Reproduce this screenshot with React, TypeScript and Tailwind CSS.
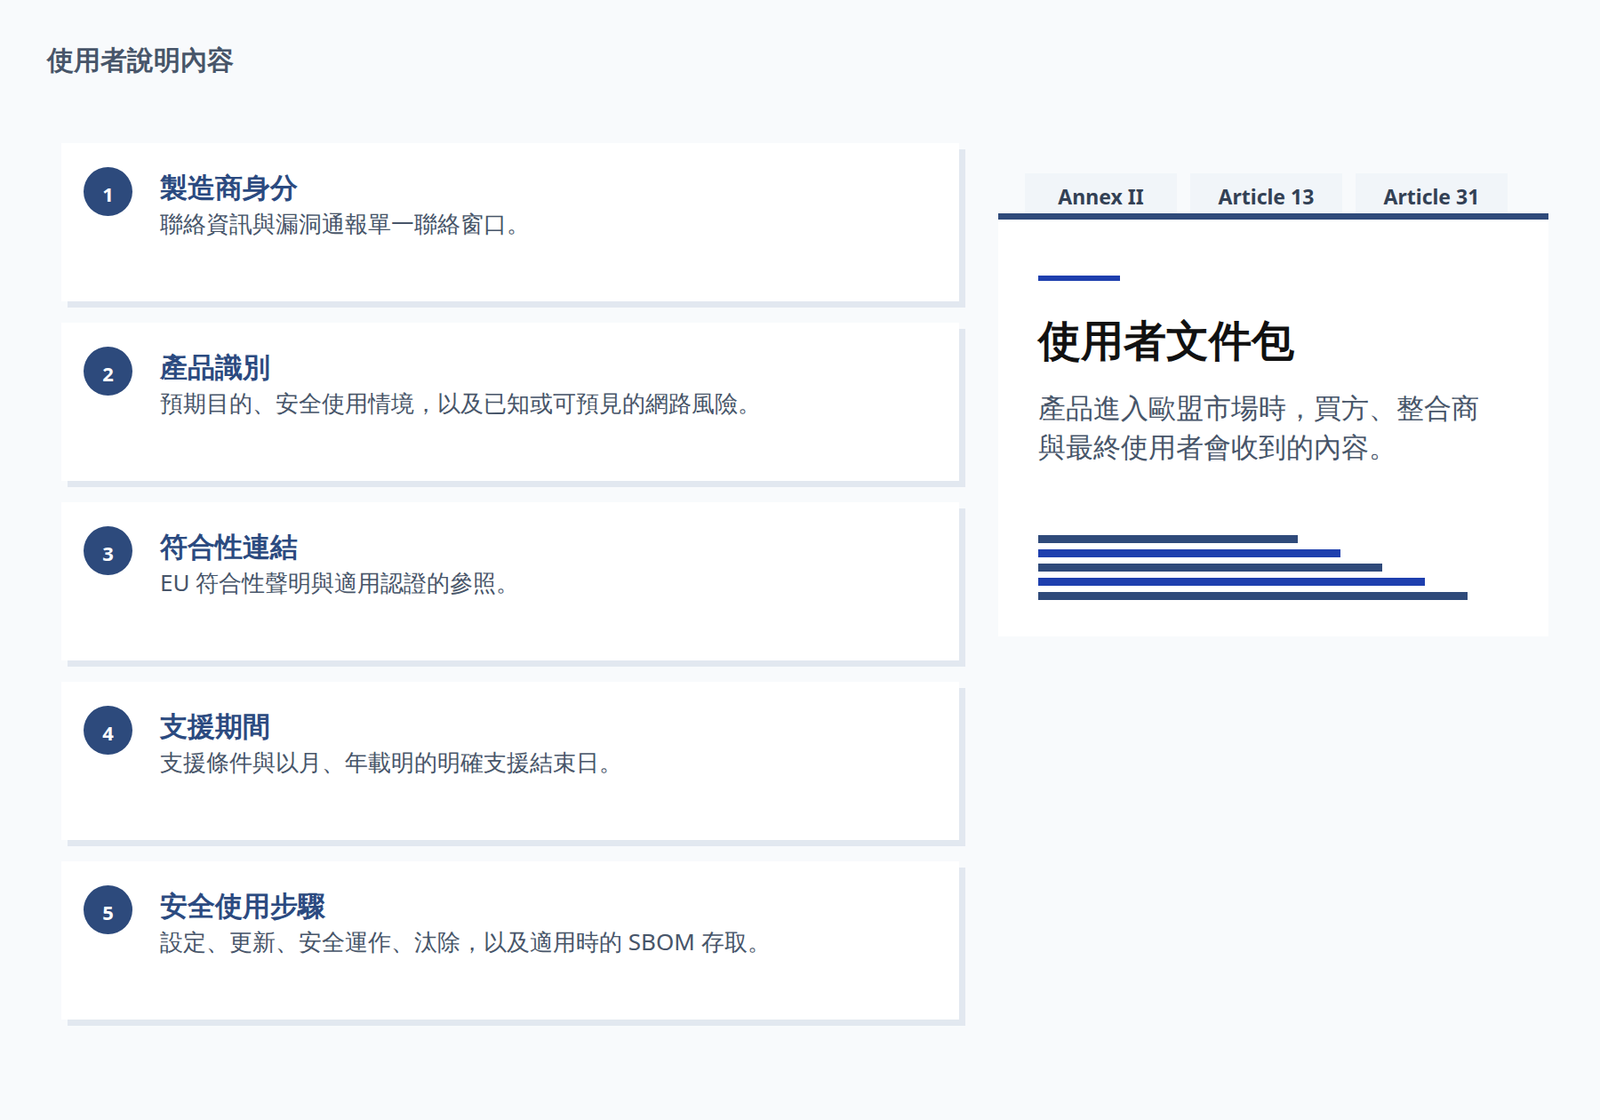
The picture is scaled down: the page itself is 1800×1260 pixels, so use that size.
const items = [
  ["製造商身分", "聯絡資訊與漏洞通報單一聯絡窗口。"],
  ["產品識別", "預期目的、安全使用情境，以及已知或可預見的網路風險。"],
  ["符合性連結", "EU 符合性聲明與適用認證的參照。"],
  ["支援期間", "支援條件與以月、年載明的明確支援結束日。"],
  ["安全使用步驟", "設定、更新、安全運作、汰除，以及適用時的 SBOM 存取。"],
];
const bars = [
  [292, "bg-[#2f4a7a]"],
  [340, "bg-[#1e3fae]"],
  [387, "bg-[#2f4a7a]"],
  [435, "bg-[#1e3fae]"],
  [483, "bg-[#2f4a7a]"],
] as const;

export default function App() {
  return (
    <div className="w-[1800px] h-[1260px] bg-[#f8fafc] font-['Noto_Sans_CJK_TC',sans-serif] pl-[53px] pt-[47px]">
      <h1 className="text-[30px] font-bold text-[#475569] leading-[40px]">使用者說明內容</h1>
      <div className="flex mt-[74px] pl-[16px] gap-[44px]">
        <div className="flex flex-col gap-[24px]">
          {items.map(([t, d], i) => (
            <div key={i} className="w-[1010px] h-[178px] bg-white shadow-[7px_7px_0_#e2e8f0] flex pl-[25px] pt-[27px] gap-[31px]">
              <div className="w-[55px] h-[55px] rounded-full bg-[#2d4a7c] text-white flex items-center justify-center text-[22px] font-bold font-['DejaVu_Serif',serif] pt-[6px]">{i + 1}</div>
              <div>
                <div className="text-[31px] font-bold text-[#2b4a80] leading-[40px] mt-[2px]">{t}</div>
                <div className="text-[26px] text-[#475569] leading-[34px] mt-[4px]">{d}</div>
              </div>
            </div>
          ))}
        </div>
        <div className="w-[619px] mt-[34px] self-start">
          <div className="flex gap-[15px] pl-[30px]">
            {["Annex II", "Article 13", "Article 31"].map((t) => (
              <div key={t} className="w-[171px] h-[45px] bg-[#f1f5f9] text-[#334155] font-bold text-[23px] flex items-end justify-center pb-[2px]">{t}</div>
            ))}
          </div>
          <div className="h-[7px] bg-[#2f4a7a]" />
          <div className="bg-white px-[45px] pt-[63px] pb-[41px]">
            <div className="w-[92px] h-[6px] bg-[#1e3fae]" />
            <div className="text-[48px] font-bold text-[#111] leading-[60px] mt-[36px]">使用者文件包</div>
            <div className="text-[31px] text-[#475569] leading-[44px] mt-[24px] w-[520px]">產品進入歐盟市場時，買方、整合商與最終使用者會收到的內容。</div>
            <div className="flex flex-col gap-[7px] mt-[78px]">
              {bars.map(([w, c], i) => (
                <div key={i} className={`h-[9px] ${c}`} style={{ width: w }} />
              ))}
            </div>
          </div>
        </div>
      </div>
    </div>
  );
}
